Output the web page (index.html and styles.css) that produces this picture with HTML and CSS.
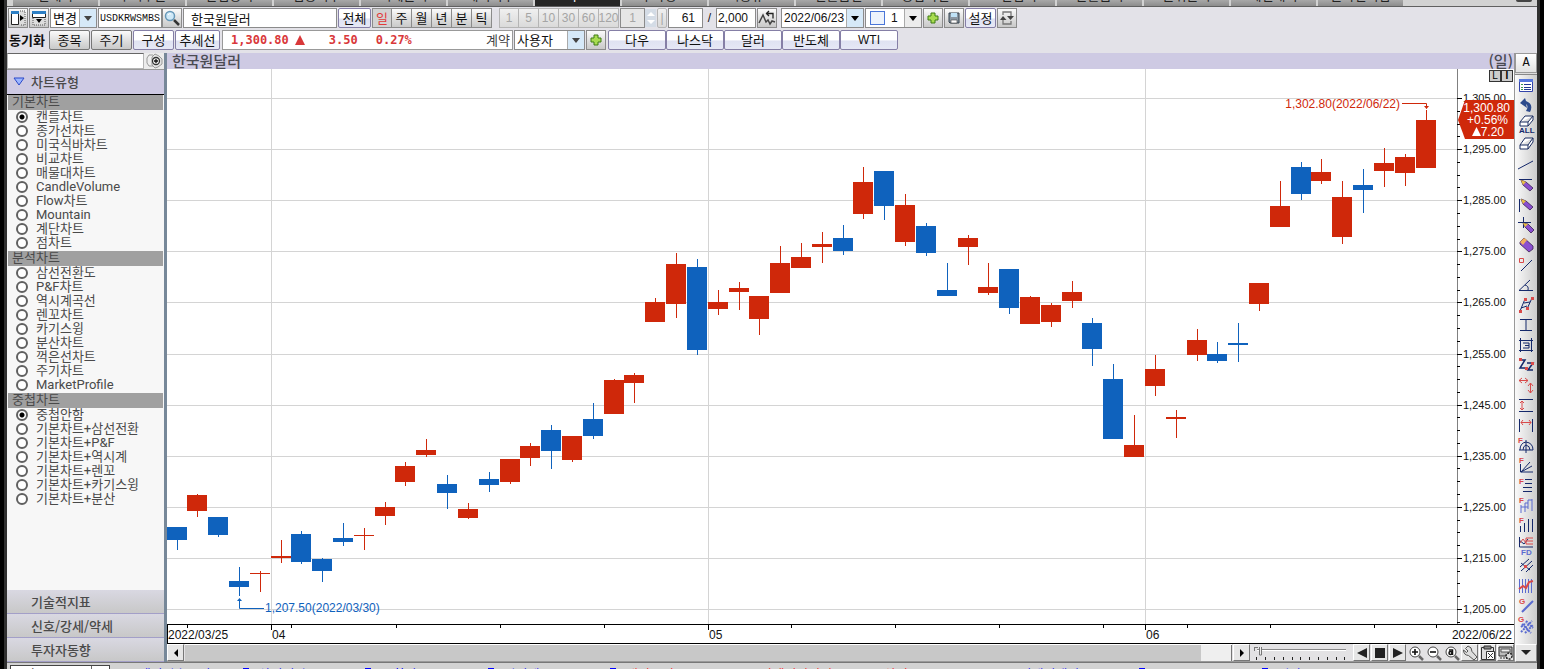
FILE: index.html
```html
<!DOCTYPE html>
<html lang="ko">
<head>
<meta charset="utf-8">
<title>한국원달러 차트</title>
<link rel="stylesheet" href="styles.css">
</head>
<body>
<div class="app">
  <nav class="tabs">
    <span class="tab">현재가</span><span class="tab">주식주문</span><span class="tab">관심종목</span><span class="tab">업종지수</span><span class="tab">시세분석</span><span class="tab">해외지수</span><span class="tab active">차트</span><span class="tab">투자정보</span><span class="tab">시황뉴스</span><span class="tab">선물옵션</span><span class="tab">종합화면</span><span class="tab">조건검색</span><span class="tab">환율금리</span><span class="tab">순위분석</span><span class="tab">체결내역</span><span class="tab">온라인지점</span>
    <i class="knob"></i>
  </nav>

  <header class="toolbar">
    <div class="row">
      <button class="btn ico" aria-label="왼쪽 패널"><svg width="16" height="16"><path d="M1.500 1.500h7v13h-7z" fill="#fff" stroke="#222"/><path d="M1 1h8v3H1z" fill="#2d7fc4"/><path d="M10 1h5v14h-5" fill="#ddd" stroke="#555" stroke-dasharray="1 1"/><path d="M10 5l4 3-4 3z"/></svg></button>
      <button class="btn ico" aria-label="위쪽 패널"><svg width="16" height="16"><path d="M1.500 1.500h13v6h-13z" fill="#fff" stroke="#222"/><path d="M1 1h14v3H1z" fill="#2d7fc4"/><path d="M2 8v7h12V8" fill="#ddd" stroke="#555" stroke-dasharray="1 1"/><path d="M5 9h6l-3 4z"/></svg></button>
      <div class="combo w-change"><select aria-label="변경"><option>변경</option></select><i class="drop blue"></i></div>
      <div class="joined">
        <input class="field code" aria-label="종목코드" value="USDKRWSMBS">
        <button class="btn ico" aria-label="검색"><svg width="16" height="16"><circle cx="6" cy="6" r="4.500" fill="#cfe9f8" stroke="#6698b8" stroke-width="1.500"/><path d="M4 5q1-2 3-1" stroke="#fff" fill="none"/><path d="M10 10l5 5" stroke="#333" stroke-width="2.500"/></svg></button>
      </div>
      <input class="field name" aria-label="종목명" value="한국원달러">
      <button class="btn light w33">전체</button>
      <div class="group">
        <button class="btn period on">일</button><button class="btn period">주</button><button class="btn period">월</button><button class="btn period">년</button><button class="btn period">분</button><button class="btn period">틱</button>
      </div>
      <div class="group minutes">
        <button class="btn period off" disabled>1</button><button class="btn period off" disabled>5</button><button class="btn period off" disabled>10</button><button class="btn period off" disabled>30</button><button class="btn period off" disabled>60</button><button class="btn period off" disabled>120</button>
      </div>
      <div class="joined">
        <input class="field step" aria-label="간격" value="1" disabled>
        <span class="spin"><i></i><i class="down"></i></span>
      </div>
      <button class="btn light thin off" disabled>|</button>
      <div class="joined">
        <input class="field bars" aria-label="표시 봉수" value="61">
        <span class="slash">/</span>
        <input class="field total" aria-label="전체 봉수" value="2,000">
      </div>
      <button class="btn ico" aria-label="이동"><svg width="18" height="16"><path d="M1 13l4-8 3 7 2-2 2 4 2-3 3 1" fill="none" stroke="#444" stroke-width="1.500"/><path d="M8 3.500h7v5M11 1L8.500 3.500 11 6" fill="none" stroke="#222" stroke-width="1.300"/></svg></button>
      <div class="combo w-date"><input class="plain" aria-label="날짜" value="2022/06/23"><i class="drop blue dark"></i></div>
      <div class="combo w-line"><i class="swatch"></i><select aria-label="분할"><option>1</option></select><i class="drop dark"></i></div>
      <div class="joined tight">
        <button class="btn ico" aria-label="추가"><svg width="14" height="14"><path d="M5 2h4v3h3v4H9v3H5V9H2V5h3z" fill="#a8dc50" stroke="#3f7d12"/></svg></button>
        <button class="btn ico" aria-label="저장"><svg width="14" height="14"><path d="M2 2h10v10H3l-1-1z" fill="#8b97a3" stroke="#33404c"/><path d="M4 2h6v4H4z" fill="#bfe2f7"/><path d="M4 9h6v3H4z" fill="#fff" stroke="#444" stroke-width=".6"/></svg></button>
        <button class="btn light w31">설정</button>
        <button class="btn ico" aria-label="새로고침"><svg width="16" height="16"><path d="M4 5V2h8v5M12 11v3H4V9" fill="none" stroke="#777" stroke-width="1.300"/><path d="M8 6h7l-3.500 4zM1 10l3-4 3.500 4z" fill="#444"/></svg></button>
      </div>
    </div>
    <div class="row second">
      <span class="sync">동기화</span>
      <button class="btn gray w41">종목</button>
      <button class="btn gray w41">주기</button>
      <button class="btn light w41">구성</button>
      <button class="btn light w45">추세선</button>
      <div class="quote">
        <b class="price">1,300.80</b><svg class="up" width="12" height="11"><path d="M6 0l5 10H1z" fill="#d9383a"/></svg><b class="diff">3.50</b><b>0.27%</b><span class="unit">계약</span>
      </div>
      <div class="combo w-user"><select aria-label="사용자"><option>사용자</option></select><i class="drop blue"></i></div>
      <button class="btn ico" aria-label="사용자 추가"><svg width="14" height="14"><path d="M5 2h4v3h3v4H9v3H5V9H2V5h3z" fill="#a8dc50" stroke="#3f7d12"/></svg></button>
      <div class="group links">
        <button class="btn light w58">다우</button><button class="btn light w58">나스닥</button><button class="btn light w58">달러</button><button class="btn light w58">반도체</button><button class="btn light w58 latin">WTI</button>
      </div>
    </div>
  </header>

  <main class="work">
    <aside class="side">
      <div class="find">
        <input aria-label="지표 검색">
        <button aria-label="추가 검색"><svg width="18" height="16"><path d="M8 2H4L2 5v5l2 3h4" fill="#eee" stroke="#999"/><path d="M10 1l4 2 3 3v5l-4 3-3 1-3-3V4z" fill="#e4e4e4" stroke="#999"/><circle cx="11" cy="8" r="3.500" fill="#f4f4f4" stroke="#333" stroke-width="1.300"/><path d="M11 6v4M9 8h4" stroke="#111" stroke-width="1.300"/></svg></button>
      </div>
      <h2 class="fold open"><svg width="12" height="10"><path d="M1 1h10L6 8z" fill="#9cb6ff" stroke="#2b49c8"/></svg>차트유형</h2>
      <div class="lists">
        <h3>기본차트</h3>
        <ul>
          <li><label><input type="radio" name="kind" checked>캔들차트</label></li>
          <li><label><input type="radio" name="kind">종가선차트</label></li>
          <li><label><input type="radio" name="kind">미국식바차트</label></li>
          <li><label><input type="radio" name="kind">비교차트</label></li>
          <li><label><input type="radio" name="kind">매물대차트</label></li>
          <li><label><input type="radio" name="kind">CandleVolume</label></li>
          <li><label><input type="radio" name="kind">Flow차트</label></li>
          <li><label><input type="radio" name="kind">Mountain</label></li>
          <li><label><input type="radio" name="kind">계단차트</label></li>
          <li><label><input type="radio" name="kind">점차트</label></li>
        </ul>
        <h3>분석차트</h3>
        <ul>
          <li><label><input type="radio" name="kind">삼선전환도</label></li>
          <li><label><input type="radio" name="kind">P&amp;F차트</label></li>
          <li><label><input type="radio" name="kind">역시계곡선</label></li>
          <li><label><input type="radio" name="kind">렌꼬차트</label></li>
          <li><label><input type="radio" name="kind">카기스윙</label></li>
          <li><label><input type="radio" name="kind">분산차트</label></li>
          <li><label><input type="radio" name="kind">꺽은선차트</label></li>
          <li><label><input type="radio" name="kind">주기차트</label></li>
          <li><label><input type="radio" name="kind">MarketProfile</label></li>
        </ul>
        <h3>중첩차트</h3>
        <ul>
          <li><label><input type="radio" name="over" checked>중첩안함</label></li>
          <li><label><input type="radio" name="over">기본차트+삼선전환</label></li>
          <li><label><input type="radio" name="over">기본차트+P&amp;F</label></li>
          <li><label><input type="radio" name="over">기본차트+역시계</label></li>
          <li><label><input type="radio" name="over">기본차트+렌꼬</label></li>
          <li><label><input type="radio" name="over">기본차트+카기스윙</label></li>
          <li><label><input type="radio" name="over">기본차트+분산</label></li>
        </ul>
      </div>
      <button class="fold">기술적지표</button>
      <button class="fold">신호/강세/약세</button>
      <button class="fold">투자자동향</button>
    </aside>

    <section class="chart">
      <h1 class="title"><span>한국원달러</span><span>(일)</span></h1>
      <div class="canvas">
        <svg id="plot" role="img" aria-label="한국원달러 일봉 차트"></svg>
        <div class="li"><button>L</button><button class="bold">I</button></div>
      </div>
      <div class="scroll">
        <button class="box" aria-label="왼쪽"><svg width="6" height="8"><path d="M5 0v8L1 4z"/></svg></button>
        <div class="track"><i class="thumb"></i></div>
        <button class="box" aria-label="오른쪽"><svg width="6" height="8"><path d="M1 0v8l4-4z"/></svg></button>
        <svg class="slider" width="97" height="17"><path d="M4 5.500h89" stroke="#888"/><path d="M4 6.500h89" stroke="#fff"/><path d="M1.500 3v4M2 3.500h3M6.500 3v8h2v-8" stroke="#777" fill="#eee"/><path d="M3.500 13v3M12.500 13v3M21.500 13v3M30.500 13v3M39.500 13v3M47.500 13v3M56.500 13v3M65.500 13v3M74.500 13v3M83.500 13v3M91.500 13v3" stroke="#222"/></svg>
        <button class="box" aria-label="뒤로"><svg width="12" height="12"><path d="M11 1v10L1 6z" fill="#222"/></svg></button>
        <button class="box" aria-label="정지"><svg width="12" height="12"><path d="M1 1h10v10H1z" fill="#222"/></svg></button>
        <button class="box" aria-label="앞으로"><svg width="12" height="12"><path d="M1 1v10l10-5z" fill="#222"/></svg></button>
        <button class="flat" aria-label="확대"><svg width="16" height="16"><circle cx="7" cy="7" r="5" fill="#fff" stroke="#444"/><path d="M7 4v6M4 7h6" stroke="#111" stroke-width="1.600"/><path d="M11 11l4 4" stroke="#666" stroke-width="2.500"/></svg></button>
        <button class="flat" aria-label="축소"><svg width="16" height="16"><circle cx="7" cy="7" r="5" fill="#fff" stroke="#444"/><path d="M4 7h6" stroke="#111" stroke-width="1.600"/><path d="M11 11l4 4" stroke="#666" stroke-width="2.500"/></svg></button>
        <button class="flat" aria-label="전체 보기"><svg width="16" height="16"><circle cx="7" cy="7" r="5" fill="#fff" stroke="#444"/><circle cx="6.500" cy="8" r="1.500" fill="none" stroke="#111" stroke-width="1.500"/><path d="M5 5h3.500v5" fill="none" stroke="#111" stroke-width="1.500"/><path d="M11 11l4 4" stroke="#666" stroke-width="2.500"/></svg></button>
        <button class="box" aria-label="도구"><svg width="16" height="16"><path d="M6 1L3.500 3.500 6 6 4.500 7.500 1.500 5q0 5 5 5.500L12 15l3-3-5-5.500Q10 2 6 1z" fill="#ddd" stroke="#555"/></svg></button>
        <button class="box" aria-label="붙여넣기"><svg width="16" height="16"><path d="M1.500 2.500h12v12h-12z" fill="#ddd" stroke="#333"/><path d="M4 1h7v3H4z" fill="#888" stroke="#333"/><path d="M6.500 6.500h8v8h-8z" fill="#fff" stroke="#333"/><path d="M8 8l5 5M13 8l-5 5" stroke="#333"/></svg></button>
        <button class="box" aria-label="설정 저장"><svg width="16" height="16"><path d="M1 2h13v9H1z" fill="#bbb" stroke="#333"/><path d="M3 4h9v3H3z" fill="#eee" stroke="#555"/><path d="M2 13h9" stroke="#333" stroke-dasharray="2 1"/><circle cx="11" cy="11" r="3" fill="#ddd" stroke="#222" stroke-width="1.500" stroke-dasharray="2 1"/></svg></button>
      </div>
    </section>

    <aside class="tools">
      <button class="letter">A</button>
      <div class="palette">
        <button aria-label="목록"><svg viewBox="0 0 18 20"><path d="M2.500 4.500h13v12h-13z" fill="#fff" stroke="#3344aa"/><path d="M2 4h14v3H2z" fill="#5577dd"/><path d="M4 9.500h2M4 12.500h2M4 14.500h2" stroke="#3a9a4a"/><path d="M7 9.500h7M7 12.500h7M7 14.500h7" stroke="#223a90"/></svg></button>
        <button aria-label="되돌리기"><svg viewBox="0 0 18 20"><path d="M3 8l5-5 1 3q8 3 4 11l-4-1q3-5 0-7l1 4z" fill="#2c4a8c"/></svg></button>
        <button aria-label="모두 지우기"><svg viewBox="0 0 18 20"><path d="M8 1h8l-5 6H3zM3 7v4h8l5-6V1M11 7v4" fill="#fff" stroke="#1a2c60"/><text x="2" y="18" class="mini navy">ALL</text></svg></button>
        <button aria-label="지우기"><svg viewBox="0 0 18 20"><path d="M8 3h8l-5 7H3zM3 10v4h8l5-7V3M11 10v4" fill="#fff" stroke="#1a2c60"/></svg></button>
        <button aria-label="추세선"><svg viewBox="0 0 18 20"><path d="M1 14L16 6" class="s"/></svg></button>
        <button aria-label="수평선"><svg viewBox="0 0 18 20"><path d="M2 4.500h13" class="s"/><path d="M4 5l2 5 7 6 3-3-7-6z" class="pen"/><path d="M4 5l5 2-3 3z" fill="#e8c040"/></svg></button>
        <button aria-label="수직선"><svg viewBox="0 0 18 20"><path d="M2.500 4v13" class="s"/><path d="M4 4l2 5 7 6 3-3-7-6z" class="pen"/><path d="M4 4l5 2-3 3z" fill="#e8c040"/></svg></button>
        <button aria-label="십자선"><svg viewBox="0 0 18 20"><path d="M1 7.500h13M6.500 2v11" class="s"/><path d="M6 8l2 4 6 6 3-3-6-6z" class="pen"/><path d="M6 8l5 1-3 3z" fill="#e8c040"/></svg></button>
        <button aria-label="자유선"><svg viewBox="0 0 18 20"><path d="M3 7l4-4 9 8v3l-4 3-9-8z" class="pen"/><path d="M3 7l4-4 3 2-4 5z" fill="#f0b060"/></svg></button>
        <button aria-label="사각 추세"><svg viewBox="0 0 18 20"><path d="M2.500 3.500h4v4h-4z" class="r"/><path d="M4 16L15 5" class="s"/></svg></button>
        <button aria-label="각도선"><svg viewBox="0 0 18 20"><path d="M16 15.500H2L13 5M8 10q4 1 3 5" class="s"/></svg></button>
        <button aria-label="채널"><svg viewBox="0 0 18 20"><path d="M3 16L8 4M10 14l5-11M7 8l6-1M4 13l6-2" class="s"/><path d="M2 15h3v3H2zM7 3h3v3H7zM9 12h3v3H9zM14 2h3v3h-3z" fill="#d94a4a"/></svg></button>
        <button aria-label="범위"><svg viewBox="0 0 18 20"><path d="M3 4.500h12M3 15.500h12M9 5v11" class="s"/></svg></button>
        <button aria-label="박스"><svg viewBox="0 0 18 20"><path d="M3.500 3v14M14.500 3v14M2 5.500h14M2 15.500h14M6 8h6v5H6M8 10.500h4" class="s"/></svg></button>
        <button aria-label="파동"><svg viewBox="0 0 18 20"><path d="M3 5h5L3 13h6M10 8h6l-5 7h5" class="s wide"/><path d="M2 3h3v3H2zM8 12h3v3H8zM14 7h3v3h-3z" fill="#d94a4a"/></svg></button>
        <button aria-label="가로세로"><svg viewBox="0 0 18 20"><path d="M2 5.500h9M5 3L2 5.500 5 8M8 3l3 2.500L8 8M13.500 8v10M11 11l2.500-3 2.500 3M11 15l2.500 3 2.500-3" class="r"/></svg></button>
        <button aria-label="세로폭"><svg viewBox="0 0 18 20"><path d="M2 4.500h14M2 16.500h14" class="s"/><path d="M5 6v9M3 8l2-2 2 2M3 13l2 2 2-2" class="r"/></svg></button>
        <button aria-label="가로폭"><svg viewBox="0 0 18 20"><path d="M2.500 4v13M15.500 4v13" class="s"/><path d="M4 7.500h10M6 5L4 7.500 6 10M12 5l2 2.500-2 2.500" class="r"/></svg></button>
        <button aria-label="피보나치 원"><svg viewBox="0 0 18 20"><path d="M3 15q0-7 6-8 7 1 7 8M6 15q0-4 3-5 4 1 4 5M9 5v13M2 15h14" class="s"/><text x="1" y="8" class="mini red">F</text></svg></button>
        <button aria-label="피보나치 팬"><svg viewBox="0 0 18 20"><path d="M3.500 9v8H16M4 17l9-10M4 17l11-6" class="s"/><text x="2" y="8" class="mini red">F</text></svg></button>
        <button aria-label="피보나치 되돌림"><svg viewBox="0 0 18 20"><path d="M8 4.500h7M8 8.500h7M6 12.500h9M6 16.500h9" class="s"/><text x="2" y="9" class="mini red">F</text></svg></button>
        <button aria-label="피보나치 확장"><svg viewBox="0 0 18 20"><path d="M4 10v8M8 8v9M11 5v9M15 4v12M4 12h7M8 8h3M11 5h4" class="b"/><text x="2" y="8" class="mini red">F</text></svg></button>
        <button aria-label="피보나치 시간"><svg viewBox="0 0 18 20"><path d="M3.500 11v6M7.500 8v9M11.500 4v13M15.500 4v13" class="s"/><text x="2" y="8" class="mini red">F</text></svg></button>
        <button aria-label="파동 분석"><svg viewBox="0 0 18 20"><path d="M2.500 2v10H16M2 5l5 4 4-5" class="s"/><path d="M9 3h7M9 6h7M9 9h7M9 3v6M3 8l3-4 3 4" class="r"/><text x="4" y="20" class="mini blue">FD</text></svg></button>
        <button aria-label="평행선"><svg viewBox="0 0 18 20"><path d="M3 12l9-8M4 16l11-10M9 17l7-7M4 8l9 7" class="s"/><path d="M7 10h3v3H7z" fill="#d94a4a"/></svg></button>
        <button aria-label="회귀"><svg viewBox="0 0 18 20"><path d="M2.500 4v14M5.500 4v14M8.500 4v14M11.500 4v14M14.500 4v14" class="b"/><path d="M2 14l4-3 3 2 3-6 4-1" class="r wide"/></svg></button>
        <button aria-label="갠 선"><svg viewBox="0 0 18 20"><path d="M5 17L16 6" class="b wide"/><text x="2" y="9" class="mini red">G</text></svg></button>
        <button aria-label="갠 격자"><svg viewBox="0 0 18 20"><path d="M4 17L15 6M8 18l8-8M4 12l5-4M5 9l9 9M9 6l7 7" class="b wide" stroke-dasharray="2 1"/><text x="1" y="7" class="mini red">G</text></svg></button>
      </div>
      <button class="more" aria-label="더 보기"><svg width="10" height="6"><path d="M0 0h10L5 5z" fill="#222"/></svg></button>
    </aside>
  </main>

  <footer class="ticker">
    <div class="pick"><span>업종목록</span><i></i></div>
    <div class="news"><a href="#">LG에너지솔루션</a><a class="mark" href="#">삼성전자</a><a class="mark" href="#">동화약품</a><a class="mark" href="#">일성테크</a><a class="neg mark" href="#">대신증권</a><a class="neg" href="#">두산에너빌리티</a><a class="neg" href="#">삼성SDI</a><a href="#">디케이앤디</a><a class="mark" href="#">SG</a><a class="mark" href="#">기아</a></div>
  </footer>
</div>
<script src="chart.js"></script>
</body>
</html>
```

FILE: styles.css
```css
* { box-sizing: border-box; }
body { margin: 0; background: #000; font: 13px/18px "Noto Sans CJK KR", "Noto Sans", sans-serif; color: #111; }
button, input, select { font: inherit; color: inherit; margin: 0; padding: 0; border-radius: 0; }
button { cursor: pointer; display: flex; align-items: center; justify-content: center; }
svg { display: block; flex: none; }

.app { height: 100vh; display: flex; flex-direction: column; margin: 0 4px; border-left: 3px solid #303030; border-right: 3px solid #303030; background: #e3e2e8; overflow: hidden; }

.tabs { display: flex; align-items: flex-end; gap: 2px; height: 7px; flex: none; padding: 0 5px 0 6px; background: #d2d2d2; border-bottom: 1px solid #606060; overflow: hidden; }
.tab { width: 85px; height: 6px; display: flex; align-items: flex-end; justify-content: center; padding-bottom: 2px; background: linear-gradient(#a8a8a8, #8c8c8c); color: #222; line-height: 18px; }
.tab.active { background: #262626; color: #fff; }
.knob { width: 16px; height: 2px; align-self: flex-start; margin-left: auto; background: #444; border-radius: 0 0 4px 4px; }

.toolbar { flex: none; padding: 1px 1px 3px; }
.row { display: flex; align-items: center; gap: 1px; height: 20px; }
.row.second { margin-top: 2px; }
.joined, .group { display: flex; align-items: center; }
.joined.tight { gap: 1px; }
.group.minutes { margin-left: 6px; }
.btn { height: 20px; border: 1px solid #8b8b8b; background: linear-gradient(#fbfbfb, #dedede 55%, #c9c9c9); line-height: 16px; white-space: nowrap; }
.btn.ico { width: 20px; }
.btn.light { border-color: #857fa6; background: linear-gradient(#fff 50%, #dfe2f2 55%, #e6e8f5); border-radius: 2px; }
.btn.gray { border-color: #777; border-radius: 2px; }
.btn.period { width: 20px; border-left-width: 0; }
.btn.period:first-child { border-left-width: 1px; }
.btn.on { color: #e23a3a; background: #d2d2d2; }
.btn.off { color: #a5a5a5; border-color: #b5b5b5; background: linear-gradient(#f0f0f0, #dadada); font: 12px/16px "Liberation Sans", sans-serif; }
.btn.latin { font: 12px/16px "Liberation Sans", sans-serif; }
.w31 { width: 31px; }
.w33 { width: 33px; }
.w41 { width: 41px; }
.w45 { width: 45px; }
.w58 { width: 58px; }
.thin { width: 10px; }
.field, .combo { height: 20px; border: 1px solid #8b8b8b; background: #fff; }
.step, .bars, .total, .plain, .slash, .w-line select { font: 12px/18px "Liberation Sans", sans-serif; }
.code { width: 64px; padding-left: 1px; font: 10px/18px "Liberation Mono", monospace; }
.name { width: 154px; padding-left: 7px; }
.step { width: 25px; text-align: right; padding-right: 8px; background: #e6e6e6; color: #a5a5a5; }
.bars { width: 35px; text-align: right; padding-right: 7px; }
.total { width: 40px; padding-left: 1px; }
.slash { width: 13px; text-align: center; }
.spin { width: 11px; height: 18px; display: flex; flex-direction: column; justify-content: space-between; align-items: center; background: #d4dce6; padding: 3px 0; }
.spin i { border: 4px solid transparent; border-top: 0; border-bottom: 4px solid #fff; }
.spin .down { border-top: 4px solid #fff; border-bottom: 0; }
.combo { display: flex; align-items: center; overflow: hidden; }
.combo select, .plain { flex: 1; min-width: 0; border: 0; background: none; appearance: none; height: 18px; padding-left: 2px; }
.drop { width: 17px; height: 18px; flex: none; background: #ececec; border-left: 1px solid #aaa; display: flex; align-items: center; justify-content: center; }
.drop::before { content: ""; border: 4px solid transparent; border-top: 5px solid #444; border-bottom: 0; }
.drop.blue { background: #d6e9f8; }
.drop.dark::before { border-top-color: #000; }
.w-change { width: 47px; }
.w-date { width: 83px; margin-left: 3px; }
.w-line { width: 57px; }
.w-line select { padding-left: 6px; }
.w-user { width: 71px; }
.swatch { width: 15px; height: 14px; margin-left: 4px; border: 1px solid #4a76d8; background: #edf3fc; flex: none; }
.sync { width: 40px; font-weight: 700; padding-left: 1px; white-space: nowrap; }
.quote { width: 291px; height: 20px; display: flex; align-items: center; padding: 0 2px 0 8px; margin-left: 1px; border: 1px solid #999; background: #fff; color: #d9383a; font: 700 12px/18px "DejaVu Sans Mono", monospace; }
.up { margin: 0 23px 0 5px; }
.diff { margin-right: 18px; }
.unit { margin-left: auto; color: #444; font: 13px/18px "Noto Sans CJK KR", sans-serif; }
.links { margin-left: 1px; }

.work { flex: 1; min-height: 0; display: flex; }
.side { width: 157px; flex: none; display: flex; flex-direction: column; background: #f7f7f7; color: #4a4a4a; }
.find { height: 16px; display: flex; background: #eee; flex: none; }
.find input { flex: 1; min-width: 0; border: 1px solid #b5b5b5; border-top-color: #666; background: #fff; }
.find button { width: 20px; border: 0; background: #ececec; }
.fold { flex: none; height: 24px; margin: 0; padding-left: 24px; display: flex; align-items: center; justify-content: flex-start; border: 0; border-bottom: 1px solid #a39fc8; background: linear-gradient(#d9d8e2, #c8c8c8); font-size: 13px; font-weight: 500; }
.fold.open { height: 26px; padding-left: 6px; gap: 6px; border-top: 1px solid #999; border-bottom: 1px solid #000; background: #cecae3; }
.lists { flex: 1; min-height: 0; overflow: hidden; padding: 0 1px; font-family: Roboto, "Noto Sans CJK KR", sans-serif; }
.lists h3 { margin: 0; height: 15px; padding-left: 4px; background: #a0a0a0; font-size: 13px; font-weight: 400; line-height: 14px; }
.lists ul { margin: 0; padding: 0 0 1px; list-style: none; }
.lists li { height: 14px; }
.lists label { height: 14px; display: flex; align-items: center; gap: 8px; padding-left: 8px; line-height: 14px; white-space: nowrap; }
.lists input { appearance: none; width: 12px; height: 12px; flex: none; border: 2px solid #606060; border-radius: 50%; background: #fff; }
.lists input:checked { background: radial-gradient(circle, #000 2px, #fff 3px); }

.chart { flex: 1; min-width: 0; display: flex; flex-direction: column; border-left: 3px solid #778899; background: #fff; }
.title { margin: 0; height: 16px; flex: none; display: flex; justify-content: space-between; align-items: center; padding: 0 1px 0 5px; background: #cecae3; color: #4a4a52; font-size: 15px; font-weight: 500; line-height: 16px; }
.canvas { flex: 1; min-height: 0; position: relative; border-bottom: 1px solid #000; overflow: hidden; }
.canvas svg { width: 100%; height: 100%; }
.canvas text { font: 12px "Liberation Sans", sans-serif; }
.canvas .axis { font-size: 11px; }
.li { position: absolute; top: 1px; right: 1px; display: flex; }
.li button { width: 12px; height: 12px; border: 1px solid #333; background: #ccc; font: 10px/10px "Liberation Sans", sans-serif; color: #000; }
.li .bold { font-weight: 700; }
.scroll { height: 18px; flex: none; display: flex; align-items: stretch; gap: 1px; background: #e3e2e4; border-bottom: 1px solid #999; }
.box { width: 17px; border: 1px solid; border-color: #fff #777 #777 #fff; background: #e6e6e6; }
.flat { width: 17px; border: 0; background: none; }
.track { flex: 1; display: flex; justify-content: flex-end; background: #c8c8c8; border-top: 1px solid #fff; }
.thumb { width: 31px; background: #efefef; border-right: 1px solid #777; }
.slider { margin: 0 2px; }

.tools { width: 23px; flex: none; display: flex; flex-direction: column; background: #ddd; border-left: 1px solid #999; }
.letter { height: 20px; border: 1px solid #999; background: linear-gradient(#fff, #e2e2e2); font: 12px "Liberation Mono", monospace; }
.palette { flex: 1; min-height: 0; overflow: hidden; margin-top: 1px; border-top: 1px solid #888; background: linear-gradient(90deg, #fafafa, #ccc); }
.palette button { width: 21px; height: 20px; border: 0; background: none; }
.palette svg { width: 18px; height: 20px; }
.more { height: 18px; border: 1px solid; border-color: #fff #888 #888 #fff; background: #e6e6e6; }
.s { stroke: #14286a; fill: none; }
.b { stroke: #5a6bd0; fill: none; }
.r { stroke: #d94a4a; fill: none; }
.wide { stroke-width: 2; }
.s.wide { stroke-width: 1.5; }
.pen { fill: #8a4fd0; stroke: #3a2050; stroke-width: .8; }
.mini { font: 700 8px "Liberation Sans", sans-serif; }
.navy { fill: #14286a; }
.red { fill: #d94a4a; }
.blue { fill: #5a6bd0; }

.ticker { height: 7px; flex: none; display: flex; align-items: flex-start; overflow: hidden; border-top: 1px solid #777; background: #d2d2d2; padding: 2px 3px 0; }
.pick { width: 100px; flex: none; display: flex; border: 1px solid #444; background: #fff; line-height: 16px; }
.pick span { width: 81px; padding-left: 12px; border-right: 1px solid #666; }
.news { display: flex; flex: 1; padding: 0 147px 0 0; line-height: 18px; white-space: nowrap; }
.news a { flex: 1; display: flex; align-items: flex-start; color: #00f; text-decoration: none; padding-left: 13px; }
.news .mark { padding-left: 0; }
.news .mark::before { content: ""; width: 6px; height: 6px; margin: 3px 10px 0 -3px; background: #00f; }
.news .neg { color: #f00; }
```

FILE: chart.js
```js
// Each bar: direction (r = up, b = down), high, body top, body bottom, low.
// Levels run downwards on a scale where BASE is the top of the plot.
const BASE = 69;
const SPAN = 555;
const BARS = [
  ['b',527,527,540,550],['r',494,495,511,517],['b',517,517,535,537],['b',567,581,587,596],['r',571,573,574,592],
  ['r',540,556,558,563],['b',531,534,562,564],['b',558,559,571,582],['b',523,538,542,546],['r',528,535,536,550],
  ['r',502,507,516,525],['r',462,466,482,486],['r',439,450,455,457],['b',475,484,493,509],['r',503,509,518,519],
  ['b',472,479,485,492],['r',459,459,482,484],['r',443,446,458,466],['b',425,430,451,469],['r',436,436,460,462],
  ['b',403,419,436,439],['r',379,380,414,414],['r',373,375,383,403],['r',298,302,322,322],['r',253,264,304,318],
  ['b',259,267,350,355],['r',290,302,309,315],['r',282,288,292,310],['r',296,296,319,335],['r',246,263,293,293],
  ['r',243,257,268,268],['r',232,244,247,263],['b',225,238,251,255],['r',167,182,214,219],['b',171,171,206,220],
  ['r',194,205,242,246],['b',223,226,253,256],['b',263,290,296,296],['r',235,238,247,265],['r',263,287,293,295],
  ['b',269,269,308,314],['r',296,297,324,324],['r',303,305,322,327],['r',281,292,301,308],['b',318,323,349,366],
  ['b',364,379,439,439],['r',415,445,457,457],['r',355,369,386,396],['r',410,417,419,438],['r',329,340,355,361],
  ['b',342,354,361,363],['b',323,343,345,362],['r',283,283,304,311],['r',181,206,227,227],['b',162,167,194,200],
  ['r',159,172,181,184],['r',181,197,237,244],['b',169,185,190,213],['r',148,163,171,187],['r',154,157,173,186],
  ['r',110,120,168,168]
];
const RED = '#cf280a';
const BLUE = '#0f62bd';
const svg = document.getElementById('plot');

function draw() {
  const W = svg.clientWidth;
  const H = svg.clientHeight;
  const plotW = W - 57;
  const plotH = H - 19;
  const step = (plotW - 41) / 60;
  const cx = i => Math.floor(10.01 + step * i);
  const tx = i => Math.round(10 + step * i);
  const cy = v => Math.round((v - BASE) * plotH / SPAN);
  const out = [];
  const rect = (x, y, w, h, c) => out.push(`<rect x="${x}" y="${y}" width="${w}" height="${h}" fill="${c}"/>`);
  const text = (x, y, s, c, extra = '') => out.push(`<text x="${x}" y="${y}" fill="${c}" ${extra}>${s}</text>`);

  for (let k = 0; k <= 10; k++) rect(0, cy(98 + k * 51.1), plotW, 1, '#d4d4d4');
  const months = [[4.5, '04'], [25.5, '05'], [46.5, '06']];
  months.forEach(([i]) => rect(tx(i), 0, 1, plotH, '#d4d4d4'));

  rect(plotW, 0, 1, plotH, '#808080');
  for (let k = 0; k <= 42; k++) {
    const y = cy(98 + k * 12.775);
    if (y >= plotH) break;
    rect(plotW, y, k % 4 ? 3 : 5, 1, '#000');
  }
  for (let k = 0; k <= 10; k++) text(plotW + 6, cy(98 + k * 51.1) + 4, `1,${305 - k * 10}.00`, '#111', 'class="axis"');

  BARS.forEach(([kind, high, top, bottom, low], i) => {
    const c = kind === 'r' ? RED : BLUE;
    rect(cx(i), cy(high), 1, cy(low) - cy(high), c);
    rect(cx(i) - 10, cy(top), 20, Math.max(1, cy(bottom) - cy(top)), c);
  });

  const hx = cx(60);
  out.push(`<path d="M${hx - 24} ${cy(103) + .5}h24.500v5" fill="none" stroke="${RED}"/><path d="M${hx - 2} ${cy(106)}h5l-2.500 3z" fill="${RED}"/>`);
  text(hx - 26, cy(108), '1,302.80(2022/06/22)', RED, 'text-anchor="end"');
  const lx = cx(3);
  out.push(`<path d="M${lx + 25} ${cy(608) + .5}h-24.500v-9" fill="none" stroke="${BLUE}"/><path d="M${lx - 2} ${cy(601)}h5l-2.500-3z" fill="${BLUE}"/>`);
  text(lx + 26, cy(612), '1,207.50(2022/03/30)', BLUE);

  const fy = cy(100);
  out.push(`<path d="M${W} ${fy}h-49l-7 20 7 19h49z" fill="${RED}"/>`);
  text(W - 4, fy + 12, '1,300.80', '#fff', 'text-anchor="end"');
  text(W - 6, fy + 24, '+0.56%', '#fff', 'text-anchor="end"');
  text(W - 10, fy + 36, '7.20', '#fff', 'text-anchor="end"');
  out.push(`<path d="M${W - 42} ${fy + 36}h9l-4.500-9z" fill="#fff"/>`);

  rect(0, plotH, W, 1, '#000');
  rect(0, plotH, 1, 19, '#000');
  [0.5, 5.5, 10.5, 15.5, 20.5, 29.5, 34.5, 39.5, 44.5, 48.5, 52.5, 57.5, 60.5].forEach(i => rect(tx(i), plotH, 1, 4, '#000'));
  months.forEach(([i, name]) => {
    rect(tx(i), plotH, 1, 6, '#000');
    text(tx(i) + 1, plotH + 15, name, '#111');
  });
  text(1, plotH + 15, '2022/03/25', '#111');
  text(W - 2, plotH + 15, '2022/06/22', '#111', 'text-anchor="end"');
  svg.innerHTML = out.join('');
}

draw();
window.addEventListener('resize', draw);
```
